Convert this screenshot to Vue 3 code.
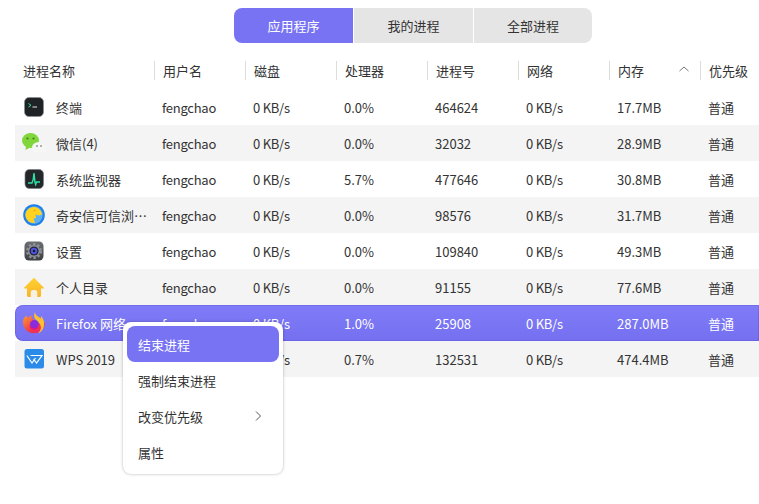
<script setup>
const tabs = ['应用程序', '我的进程', '全部进程']
const columns = ['进程名称', '用户名', '磁盘', '处理器', '进程号', '网络', '内存', '优先级']

const rows = [
  { icon: 'terminal', name: '终端', cpu: '0.0%', pid: '464624', mem: '17.7MB' },
  { icon: 'wechat', name: '微信(4)', cpu: '0.0%', pid: '32032', mem: '28.9MB' },
  { icon: 'monitor', name: '系统监视器', cpu: '5.7%', pid: '477646', mem: '30.8MB' },
  { icon: 'browser', name: '奇安信可信浏…', cpu: '0.0%', pid: '98576', mem: '31.7MB' },
  { icon: 'settings', name: '设置', cpu: '0.0%', pid: '109840', mem: '49.3MB' },
  { icon: 'home', name: '个人目录', cpu: '0.0%', pid: '91155', mem: '77.6MB' },
  { icon: 'firefox', name: 'Firefox 网络…', cpu: '1.0%', pid: '25908', mem: '287.0MB', selected: true },
  { icon: 'wps', name: 'WPS 2019', cpu: '0.7%', pid: '132531', mem: '474.4MB' }
]

const menuItems = ['结束进程', '强制结束进程', '改变优先级', '属性']
</script>

<template>
  <div class="page">
    <div class="tabs">
      <div v-for="(tab, i) in tabs" :key="tab" class="tab" :class="{ active: i === 0 }">{{ tab }}</div>
    </div>

    <div class="table-head">
      <div v-for="(col, i) in columns" :key="col" class="head-cell" :class="{ first: i === 0 }">
        <span>{{ col }}</span>
        <svg v-if="col === '内存'" class="sort" width="12" height="8" viewBox="0 0 12 8" fill="none">
          <path d="M1.500 6 6 2l4.500 4" stroke="#777" stroke-width="1" />
        </svg>
      </div>
    </div>

    <div class="table-body">
      <div v-for="row in rows" :key="row.pid" class="row" :class="{ selected: row.selected }">
        <div class="cell name-cell">
          <svg class="app-icon" width="24" height="24" viewBox="0 0 24 24">
            <defs>
              <linearGradient id="home-fill" x1="0" y1="0" x2="0" y2="1">
                <stop offset="0" stop-color="#fdd22f" />
                <stop offset="1" stop-color="#fbb32a" />
              </linearGradient>
              <linearGradient id="fox-fill" x1="0" y1="0" x2="1" y2="1">
                <stop offset="0" stop-color="#ff9a2e" />
                <stop offset="0.6" stop-color="#f3364a" />
                <stop offset="1" stop-color="#e8257f" />
              </linearGradient>
              <linearGradient id="gear-bg" x1="0" y1="0" x2="0" y2="1">
                <stop offset="0" stop-color="#6c6f73" />
                <stop offset="1" stop-color="#3c3e42" />
              </linearGradient>
            </defs>
            <template v-if="row.icon === 'terminal'">
              <rect x="2.500" y="2.500" width="19" height="19" rx="4.500" fill="#202326" stroke="#8a8f93" stroke-width="0.700" />
              <path d="M6.500 8.500l2.500 1.800-2.500 1.800" stroke="#2fe39b" stroke-width="1" fill="none" />
              <path d="M10.500 12h4.500" stroke="#e8e8e8" stroke-width="1" />
            </template>
            <template v-else-if="row.icon === 'wechat'">
              <ellipse cx="8.500" cy="9.500" rx="8.500" ry="7.500" fill="#80d63a" />
              <path d="M4 15l-.5 4 4.500-2.500z" fill="#80d63a" />
              <circle cx="5.500" cy="7.500" r="1.100" fill="#3f7f1c" />
              <circle cx="11.500" cy="7.500" r="1.100" fill="#3f7f1c" />
              <ellipse cx="17" cy="16.500" rx="7" ry="5.500" fill="#f6f6f6" />
              <circle cx="15" cy="15" r="0.900" fill="#8c8c8c" />
              <circle cx="19" cy="15" r="0.900" fill="#8c8c8c" />
            </template>
            <template v-else-if="row.icon === 'monitor'">
              <rect x="3" y="2.500" width="18.500" height="19" rx="4.500" fill="#23272a" stroke="#7b8084" stroke-width="0.700" />
              <path d="M6 16h4l1.200-3.500L12 6l1 9.500.7 2 .8-2.500h3.500" stroke="#2fe0a5" stroke-width="1.400" fill="none" />
            </template>
            <template v-else-if="row.icon === 'browser'">
              <circle cx="12" cy="12" r="10.800" fill="#1f7fe6" />
              <circle cx="12" cy="12" r="8.700" fill="#5fb0f2" />
              <path d="M3.400 12.500C3 8 7.500 3.600 12.500 4c3 .3 5.200 2 6.500 4.500l1 3-3 1-3.500-1 .5 3.500-2.500.5 1.500 4.500c-3.500.5-6.500-1-8-3.500-1-1.300-1.500-2.700-1.600-4.500z" fill="#ffd21f" />
              <circle cx="12.500" cy="7.500" r="0.800" fill="#e89a00" />
            </template>
            <template v-else-if="row.icon === 'settings'">
              <rect x="2.500" y="2.500" width="19" height="19" rx="4.500" fill="url(#gear-bg)" />
              <circle cx="12" cy="12" r="6.800" fill="none" stroke="#8f9296" stroke-width="2.400" stroke-dasharray="2.400 2" />
              <circle cx="12" cy="12" r="6" fill="#8f9296" />
              <circle cx="12" cy="12" r="4.600" fill="#23253a" />
              <circle cx="12" cy="12" r="3.200" fill="#4d55d8" />
              <circle cx="12" cy="12" r="1.200" fill="#141530" />
            </template>
            <template v-else-if="row.icon === 'home'">
              <path d="M12 2.700 2.300 12.500c-.5.600 0 1 .6 1H5v7.300c0 .7.500 1.200 1.200 1.200h11.600c.7 0 1.200-.5 1.200-1.200v-7.300h2.100c.6 0 1.100-.4.600-1z" fill="url(#home-fill)" />
              <path d="M8.700 22v-4.500A2.500 2.500 0 0 1 11.200 15h1.600a2.500 2.500 0 0 1 2.500 2.500V22z" fill="#f6f1e2" />
            </template>
            <template v-else-if="row.icon === 'firefox'">
              <path d="M1.500 8c1-2 2-3 3-3.500C4.500 6 5 6.500 6 7c1-1.500 3-2.500 5-2.500-1 1-1.500 2-1.500 3 3 .5 5 3 5 5.500L23 11.500A11 11 0 1 1 1.500 8z" fill="url(#fox-fill)" />
              <path d="M13 1c0 2 1.500 3.500 3 4.500 1 .7 2 1.500 2.500 2.200.5-1.200.5-2 .3-3 2.500 2.500 4 6 3.200 10-.5 3.500-3 6.500-6 7.500 2.500-2 3.500-5 2.500-8-.7-2.500-3-4.500-5-6-1.500-1.500-2-4-.5-7.200z" fill="#ffc02e" />
              <circle cx="12.300" cy="13.300" r="4.300" fill="#8a2bdc" />
              <path d="M7.500 14c1.500 3 5.500 4 9 1.500-1 4-9 5-9-1.500z" fill="#d9178d" />
            </template>
            <template v-else>
              <rect x="2.500" y="2" width="19.500" height="19.500" rx="2.500" fill="#2b8be8" />
              <path d="M4.800 8.500 10 16l3.500-5M8.500 8.500H20L14.500 16 11.500 12" stroke="#fff" stroke-width="1.200" fill="none" />
            </template>
          </svg>
          <span class="name">{{ row.name }}</span>
        </div>
        <div class="cell tight">fengchao</div>
        <div class="cell tight">0 KB/s</div>
        <div class="cell">{{ row.cpu }}</div>
        <div class="cell">{{ row.pid }}</div>
        <div class="cell tight">0 KB/s</div>
        <div class="cell">{{ row.mem }}</div>
        <div class="cell">普通</div>
      </div>

      <div class="menu">
        <div v-for="(item, i) in menuItems" :key="item" class="menu-item" :class="{ active: i === 0 }">
          <span>{{ item }}</span>
          <svg v-if="i === 2" width="8" height="12" viewBox="0 0 8 12" fill="none">
            <path d="M2 1.500 6.500 6 2 10.500" stroke="#555" stroke-width="1" />
          </svg>
        </div>
      </div>
    </div>
  </div>
</template>

<style scoped>
.page {
  width: 759px;
  height: 504px;
  overflow: hidden;
  background: #fff;
  color: #333;
  font-family: "Noto Sans CJK SC", "Noto Sans", sans-serif;
  font-size: 13px;
  padding-top: 8px;
  box-sizing: border-box;
}

.tabs {
  display: grid;
  grid-template-columns: 119px 119px 118px;
  gap: 1px;
  width: 358px;
  height: 35px;
  margin-left: 234px;
}

.tab {
  display: flex;
  align-items: center;
  justify-content: center;
  background: #e5e5e5;
}

.tab:first-child {
  border-radius: 8px 0 0 8px;
}

.tab:last-child {
  border-radius: 0 8px 8px 0;
}

.tab.active {
  background: #7773f3;
  color: #fff;
}

.table-head {
  display: grid;
  grid-template-columns: 139px repeat(7, 91px);
  margin: 18px 0 0 15px;
  height: 19px;
}

.head-cell {
  display: flex;
  align-items: center;
  justify-content: space-between;
  padding: 0 10px 0 8px;
  border-left: 1px solid #dcdcdc;
  white-space: nowrap;
}

.head-cell.first {
  border-left: none;
}

.sort {
  margin-top: -3px;
}

.table-body {
  position: relative;
  margin: 9px 0 0 15px;
}

.row {
  display: grid;
  grid-template-columns: 140px repeat(7, 91px);
  height: 36px;
  align-items: center;
}

.row:nth-child(even) {
  background: #f4f4f4;
}

.row.selected {
  background: linear-gradient(#807bf8, #7470ef);
  border-radius: 8px 0 0 8px;
  box-shadow: inset 0 0 0 1px rgba(70, 60, 190, 0.22);
  color: #fff;
}

.cell {
  padding-left: 7px;
  white-space: nowrap;
}

.tight {
  letter-spacing: -0.25px;
}

.name-cell {
  display: flex;
  align-items: center;
  gap: 10px;
}

.app-icon {
  flex: none;
}

.name {
  white-space: nowrap;
}

.menu {
  position: absolute;
  left: 108px;
  top: 233px;
  width: 160px;
  box-sizing: border-box;
  padding: 4px;
  background: #fff;
  border-radius: 8px;
  box-shadow: 0 0 3px rgba(0, 0, 0, 0.3);
  color: #333;
}

.menu-item {
  display: flex;
  align-items: center;
  justify-content: space-between;
  height: 36px;
  padding: 0 17px 0 11px;
  border-radius: 8px;
}

.menu-item.active {
  background: #7773f3;
  color: #fff;
}
</style>

<style>
body {
  margin: 0;
}
</style>
